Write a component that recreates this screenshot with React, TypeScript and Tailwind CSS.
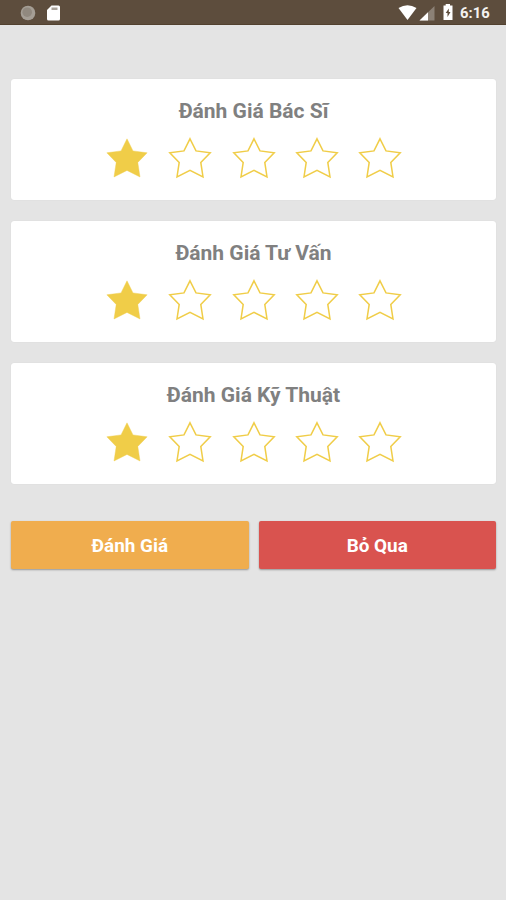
import React, { useState } from 'react';

const STAR_PATH = 'M22 2.8 L28 14.9 L42.2 16.8 L32.8 26.4 L35 41 L22 34.4 L9 41 L11.2 26.4 L1.8 16.8 L16 14.9 Z';

interface RatingCardProps {
  title: string;
}

const StatusBar: React.FC = () => (
  <div className="h-[24px] bg-[#5d4d3d] border-b border-[#52412f] box-content">
    <svg width="506" height="24" viewBox="0 0 506 24">
      <circle cx="28" cy="13" r="7.3" fill="#a59e95" />
      <circle cx="27.2" cy="12.2" r="4.8" fill="#91897f" />
      <path d="M51.5 5.5 H58.5 Q60 5.5 60 7 V19 Q60 20.5 58.5 20.5 H48.5 Q47 20.5 47 19 V10 Z" fill="#fff" />
      <path d="M51.5 7.5 H57.5 V10 H51.5 Z" fill="#aaa39b" />
      <path d="M398.5 8 Q407.5 2.5 416.5 8 L407.5 20 Z" fill="#fff" />
      <path d="M434.5 6 V20.5 H419.5 Z" fill="#8b8176" />
      <path d="M428 12.3 V20.5 H419.5 Z" fill="#fff" />
      <path d="M445.7 4 H450 V5.5 H452.5 V20 H443.5 V5.5 H445.7 Z" fill="#fff" />
      <path d="M448.8 8.5 L445.7 13 H447.5 V17 L450.5 12 H448.8 Z" fill="#5d4d3d" />
      <text x="460" y="18" className="fill-[#f4f2f0] text-[14.8px] font-bold font-[Roboto,sans-serif]">
        6:16
      </text>
    </svg>
  </div>
);

const RatingCard: React.FC<RatingCardProps> = ({ title }) => {
  const [rating, setRating] = useState(1);

  return (
    <div className="h-[121px] bg-white rounded-[3px] shadow-[0_0_1px_rgba(0,0,0,0.12)] flex flex-col items-center">
      <h2 className="mt-[17px] h-[30px] leading-[30px] text-[21px] font-bold text-[#808080] whitespace-nowrap">
        {title}
      </h2>
      <div className="mt-[10px] flex">
        {[1, 2, 3, 4, 5].map((value) => (
          <button
            key={value}
            className="w-[63.25px] flex justify-center"
            onClick={() => setRating(value)}
          >
            <svg width="44" height="44" viewBox="0 0 44 44">
              <path
                d={STAR_PATH}
                fill={value <= rating ? '#f0cd48' : 'none'}
                stroke="#f0cd48"
                strokeWidth={value <= rating ? 0.4 : 1.5}
              />
            </svg>
          </button>
        ))}
      </div>
    </div>
  );
};

const App: React.FC = () => {
  return (
    <div className="min-h-screen bg-[#e4e4e4] font-[Roboto,sans-serif]">
      <StatusBar />
      <div className="pt-[53.6px] pl-[11px] pr-[10px]">
        <div className="flex flex-col gap-[21.4px]">
          <RatingCard title="Đánh Giá Bác Sĩ" />
          <RatingCard title="Đánh Giá Tư Vấn" />
          <RatingCard title="Đánh Giá Kỹ Thuật" />
        </div>
        <div className="mt-[36.3px] flex gap-[10px] text-white text-[18.9px] font-bold">
          <button className="flex-1 h-[48px] pt-[4px] rounded-[2px] bg-[#f0ad4e] shadow-[0_1px_2px_rgba(0,0,0,0.35)]">
            Đánh Giá
          </button>
          <button className="flex-1 h-[48px] pt-[4px] rounded-[2px] bg-[#d9534f] shadow-[0_1px_2px_rgba(0,0,0,0.35)]">
            Bỏ Qua
          </button>
        </div>
      </div>
    </div>
  );
};

export default App;
